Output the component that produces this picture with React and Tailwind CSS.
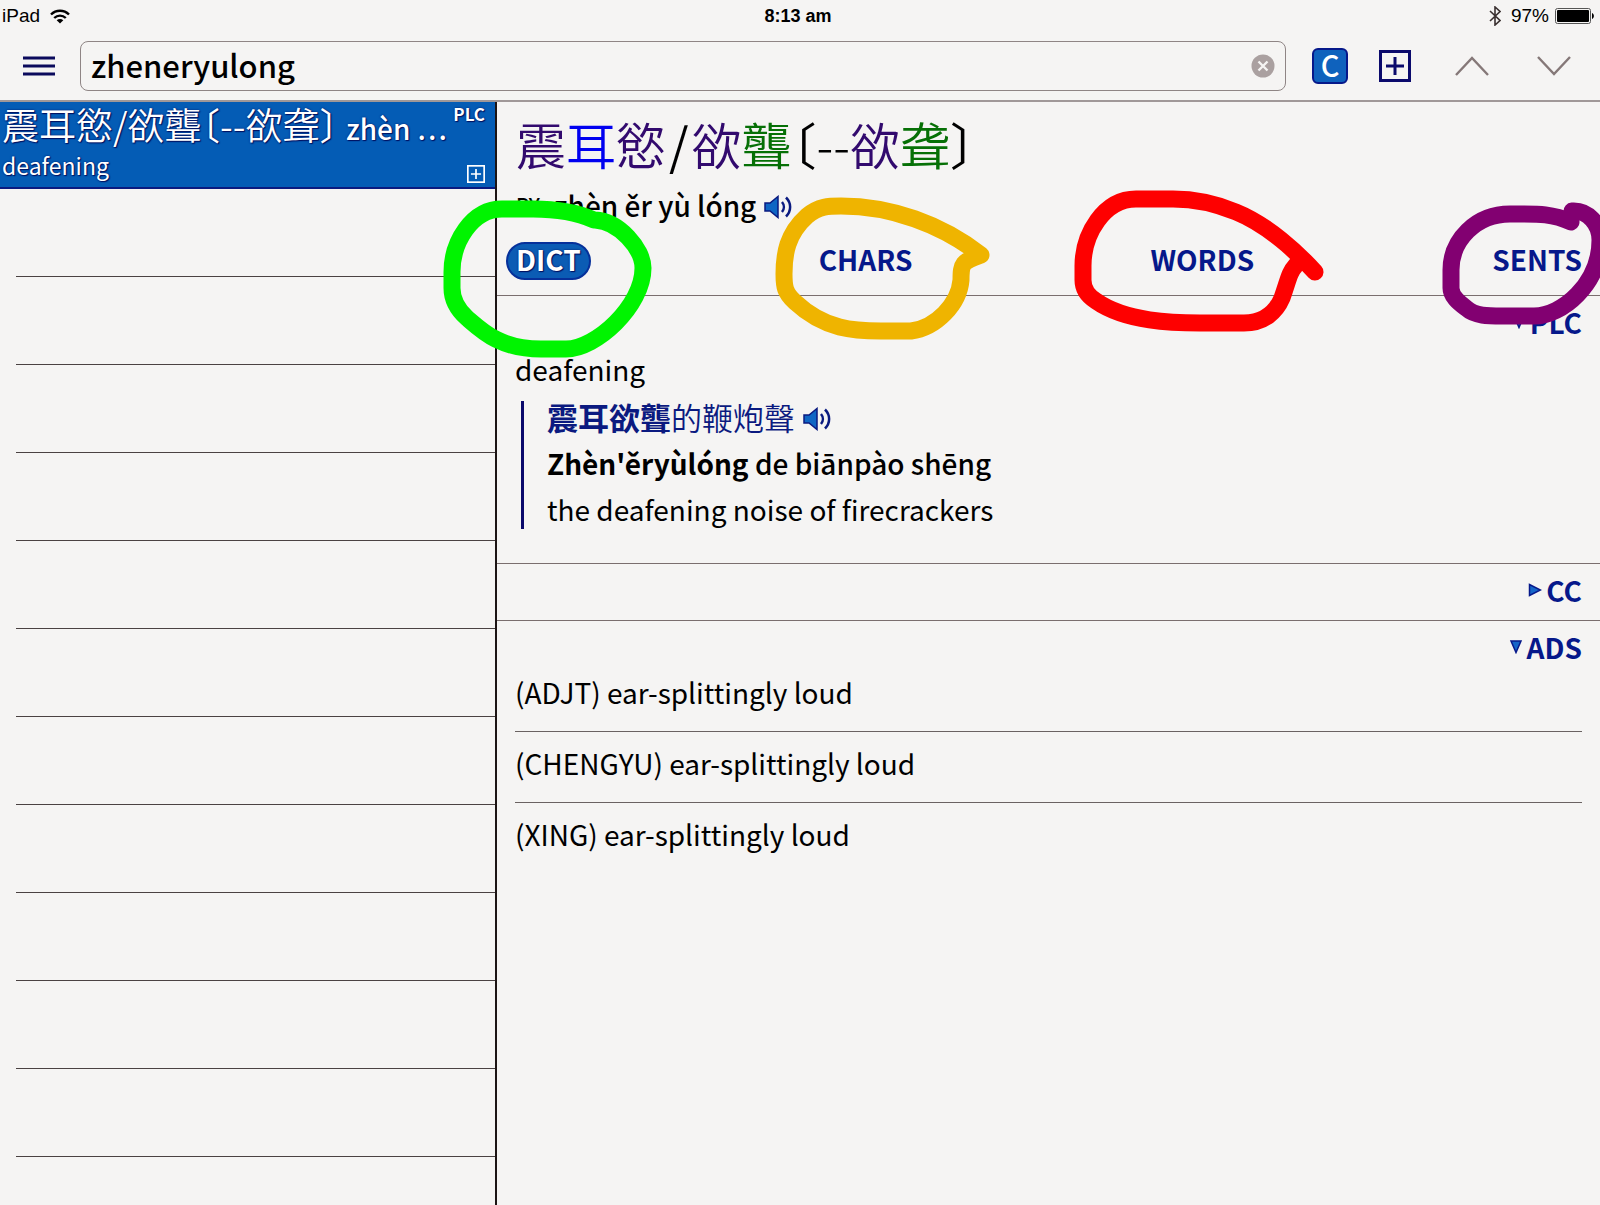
import React from 'react';

const EMPTY_ROWS = 11;

const ADS_ENTRIES = [
  '(ADJT) ear-splittingly loud',
  '(CHENGYU) ear-splittingly loud',
  '(XING) ear-splittingly loud',
];

// Freehand marks, drawn relative to the top left corner of their tab
const TABS = [
  {
    label: 'DICT',
    active: true,
    stroke: '#00f400',
    mark: 'M86 -22C66 -31 45 -33 25 -33L-6 -33C-36 -33 -56 0 -56 30L-56 46C-56 58 -50 68 -41 76C-26 89 -8 107 33 107L58 107C88 107 135 64 135 26C135 7 111 -21 87 -22',
  },
  {
    label: 'CHARS',
    stroke: '#efb400',
    mark: 'M170 13C130 -18 80 -36 30 -36C18 -36 8 -36 -4 -26C-24 -8 -27 12 -27 32C-27 45 -26 51 -16 60C14 88 44 89 70 89L100 89C125 86 148 62 150 38C150 20 152 20 170 13',
  },
  {
    label: 'WORDS',
    stroke: '#fe0000',
    mark: 'M173 30C156 11 126 -17 94 -30C70 -40 50 -43 31 -43L-6 -43C-38 -43 -59 -8 -59 24L-59 38C-59 48 -54 54 -46 59C-16 80 32 81 58 81L102 81C122 81 134 70 140 56C147 36 147 31 154 23',
  },
  {
    label: 'SENTS',
    stroke: '#820071',
    mark: 'M87 -20C67 -29 52 -28 26 -28C-8 -28 -33 -2 -33 28L-33 46C-33 54 -26 60 -18 66C-8 75 6 74 26 74L50 74C78 74 116 42 116 -2C116 -18 104 -32 88 -31',
  },
];

function PlusBox({ className }) {
  return (
    <svg viewBox="0 0 32 32" className={className} fill="none" stroke="currentColor" aria-hidden="true">
      <rect x="1.5" y="1.5" width="29" height="29" strokeWidth="3" />
      <path d="M16 7v18M7 16h18" strokeWidth="3" />
    </svg>
  );
}

function Speaker() {
  return (
    <svg viewBox="0 0 28 24" className="h-6 w-7" fill="none" aria-hidden="true">
      <path d="M1 8h5l8-6.500v21l-8-6.500h-5z" fill="#0f66c4" stroke="#0a1a80" strokeWidth="1.500" />
      <path d="M18 7c2.500 3 2.500 7 0 10" stroke="#0a1a80" strokeWidth="2.500" />
      <path d="M22 2.500c5.500 5.500 5.500 13.500 0 19" stroke="#0a1a80" strokeWidth="2.500" />
    </svg>
  );
}

function SectionToggle({ label, open }) {
  return (
    <div className="flex h-14 items-center justify-end pb-1">
      <button type="button" aria-expanded={open} className="flex items-center gap-1 text-[28px] leading-10 font-bold text-[#06188a]">
        <svg viewBox="0 0 14 14" className="size-3.5" fill="#1565c8" stroke="#06188a" strokeWidth="1.500" aria-hidden="true">
          {open ? <path d="M2 1h10l-5 11.500z" /> : <path d="M1.500 1.500v11l11-5.500z" />}
        </svg>
        {label}
      </button>
    </div>
  );
}

function StatusBar() {
  return (
    <div className="grid h-8 grid-cols-3 items-center pr-1.5 pl-0.5 font-['Liberation_Sans',sans-serif] text-[19px] leading-8">
      <div className="flex items-center gap-2.5">
        <span>iPad</span>
        <svg viewBox="0 0 20 15" className="h-[15px] w-5" fill="none" stroke="#000" strokeWidth="2.400" aria-hidden="true">
          <path d="M1 5.500c5-5 13-5 18 0" />
          <path d="M4.200 9c3.300-3.200 8.300-3.200 11.600 0" />
          <path d="M10 14.500l-3.300-3.300c1.900-1.700 4.700-1.700 6.600 0z" fill="#000" stroke="none" />
        </svg>
      </div>
      <div className="text-center text-lg font-bold">8:13 am</div>
      <div className="flex items-center justify-end">
        <svg viewBox="0 0 12 20" className="mr-2.5 h-5 w-3" fill="none" stroke="#3a3030" strokeWidth="1.600" aria-hidden="true">
          <path d="M1 5l10 9.500-5 4.500v-18l5 4.500-10 9.500" />
        </svg>
        <span>97%</span>
        <svg viewBox="0 0 39 16" className="ml-1.5 h-4 w-[39px]" aria-hidden="true">
          <rect x="0.500" y="0.500" width="35" height="15" rx="2" fill="none" stroke="#555" />
          <rect x="2" y="2" width="32" height="12" rx="1" />
          <path d="M37 5c2.500 1 2.500 5 0 6z" />
        </svg>
      </div>
    </div>
  );
}

function Toolbar() {
  return (
    <header className="flex h-[70px] items-center border-b-2 border-[#a09898]">
      <button type="button" aria-label="Menu" className="ml-[23px] text-[#0b0a5c]">
        <svg viewBox="0 0 32 20" className="h-5 w-8" stroke="currentColor" strokeWidth="3" aria-hidden="true">
          <path d="M0 2h32M0 10h32M0 18h32" />
        </svg>
      </button>
      <div className="ml-[25px] flex h-[50px] flex-1 items-center rounded-lg border border-[#8f8585] pr-2.5 pl-2.5">
        <input
          type="text"
          aria-label="Search"
          defaultValue="zheneryulong"
          className="h-full min-w-0 flex-1 bg-transparent pb-1 text-[31px] font-medium outline-none"
        />
        <button type="button" aria-label="Clear search">
          <svg viewBox="0 0 24 24" className="size-6" aria-hidden="true">
            <circle cx="12" cy="12" r="11.500" fill="#aaa0a0" />
            <path d="M7.500 7.500l9 9M16.500 7.500l-9 9" stroke="#f5f4f3" strokeWidth="2.400" />
          </svg>
        </button>
      </div>
      <button
        type="button"
        className="ml-[26px] flex size-9 items-center justify-center rounded-md border-2 border-[#06188a] bg-[#0f62bd] pb-1 text-[29px] leading-8 font-medium text-white"
      >
        C
      </button>
      <button type="button" aria-label="Add card" className="ml-[31px] text-[#0b0a6c]">
        <PlusBox className="size-8" />
      </button>
      <button type="button" aria-label="Previous" className="ml-11">
        <svg viewBox="0 0 34 20" className="h-5 w-[34px]" fill="none" stroke="#857878" strokeWidth="2.400" aria-hidden="true">
          <path d="M1 19L17 2l16 17" />
        </svg>
      </button>
      <button type="button" aria-label="Next" className="mr-[29px] ml-12">
        <svg viewBox="0 0 34 20" className="h-5 w-[34px]" fill="none" stroke="#857878" strokeWidth="2.400" aria-hidden="true">
          <path d="M1 1l16 17L33 1" />
        </svg>
      </button>
    </header>
  );
}

function Sidebar() {
  return (
    <aside className="w-[497px] flex-shrink-0 border-r-2 border-[#1c1414]">
      <button
        type="button"
        className="flex h-[87px] w-full justify-between border-b-2 border-[#0a1a80] bg-[#045cb5] pr-2.5 pl-0.5 text-left text-white [text-shadow:0_0_2px_#001060,1px_1px_1px_#001060]"
      >
        <span className="min-w-0">
          <span className="block text-[37px] leading-[44px] font-[350] whitespace-nowrap">
            震耳慾/欲聾<span className="font-normal [font-feature-settings:'halt']">〔</span>--欲聋<span className="font-normal [font-feature-settings:'halt']">〕</span>
            <span className="ml-2 text-[28px] font-medium">zhèn …</span>
          </span>
          <span className="block text-[23px] leading-[30px]">deafening</span>
        </span>
        <span className="flex flex-shrink-0 flex-col items-end justify-between pb-1">
          <span className="text-[17px] leading-6 font-bold">PLC</span>
          <PlusBox className="size-[18px]" />
        </span>
      </button>
      <ul>
        {Array.from({ length: EMPTY_ROWS }, (_, i) => (
          <li key={i} className="ml-4 h-[88px] border-b border-[#4a4242]" />
        ))}
      </ul>
    </aside>
  );
}

function TabBar() {
  return (
    <nav className="flex h-[68px] items-center justify-between border-b border-[#7a6e6e] pr-[18px] pb-0.5 pl-[19px]">
      {TABS.map(tab => (
        <div key={tab.label} className="relative">
          <button
            type="button"
            className={
              tab.active
                ? '-mx-2.5 block h-[38px] rounded-full border-2 border-[#06309a] bg-[#0b5cb4] px-2 pb-1 text-[28px] leading-[30px] font-bold text-white [text-shadow:0_0_2px_#001060,1px_1px_1px_#001060]'
                : 'block h-[38px] pb-1 text-[28px] leading-[34px] font-bold text-[#06188a]'
            }
          >
            {tab.label}
          </button>
          <svg className="pointer-events-none absolute top-0 -left-2 z-10 size-px overflow-visible" fill="none" aria-hidden="true">
            <path d={tab.mark} stroke={tab.stroke} strokeWidth="17" strokeLinecap="round" strokeLinejoin="round" />
          </svg>
        </div>
      ))}
    </nav>
  );
}

function Entry() {
  return (
    <main className="min-w-0 flex-1 text-[28px] leading-[46px]">
      <h1 className="px-[19px] pt-1.5 pb-1 text-[50px] leading-[70px] font-[350] whitespace-nowrap">
        <span className="text-[#320a6e]">震</span>
        <span className="text-[#0000f0]">耳</span>
        <span className="text-[#320a6e]">慾</span>
        <span className="mx-[3px] font-normal">/</span>
        <span className="text-[#320a6e]">欲</span>
        <span className="text-[#067006]">聾</span>
        <span className="font-normal [font-feature-settings:'halt']">〔</span>
        <span className="font-light">--</span>
        <span className="text-[#320a6e]">欲</span>
        <span className="text-[#067006]">聋</span>
        <span className="font-normal [font-feature-settings:'halt']">〕</span>
      </h1>
      <div className="flex items-center gap-2 px-[19px] font-medium">
        <span className="text-xl">PY</span>
        <span className="ml-1.5">zhèn ěr yù lóng</span>
        <button type="button" aria-label="Play pronunciation" className="pt-1"><Speaker /></button>
      </div>
      <TabBar />

      <section className="border-b border-[#7a6e6e] px-[18px] pb-[34px]">
        <SectionToggle label="PLC" open />
        <p className="-mt-1.5">deafening</p>
        <div className="mt-[9px] ml-1.5 flex h-32 flex-col justify-center border-l-3 border-[#0b0a6c] pb-1 pl-[23px]">
          <p className="flex items-center gap-2 text-[31px] text-[#0b1a80]">
            <span className="font-[350]"><b className="font-bold">震耳欲聾</b>的鞭炮聲</span>
            <button type="button" aria-label="Play example" className="pt-1"><Speaker /></button>
          </p>
          <p className="font-medium"><b className="font-bold">Zhèn'ěryùlóng</b> de biānpào shēng</p>
          <p>the deafening noise of firecrackers</p>
        </div>
      </section>

      <section className="border-b border-[#7a6e6e] px-[18px]">
        <SectionToggle label="CC" open={false} />
      </section>

      <section className="px-[18px]">
        <SectionToggle label="ADS" open />
        <ul className="-mt-2">
          {ADS_ENTRIES.map((entry, i) => (
            <li key={entry} className={i === 0 ? 'pb-4' : 'border-t border-[#6a6262] pt-2 pb-4'}>
              {entry}
            </li>
          ))}
        </ul>
      </section>
    </main>
  );
}

export default function App() {
  return (
    <div className="flex min-h-screen flex-col overflow-hidden bg-[#f5f4f3] font-['Noto_Sans_CJK_TC',sans-serif] text-black">
      <StatusBar />
      <Toolbar />
      <div className="flex flex-1">
        <Sidebar />
        <Entry />
      </div>
    </div>
  );
}
